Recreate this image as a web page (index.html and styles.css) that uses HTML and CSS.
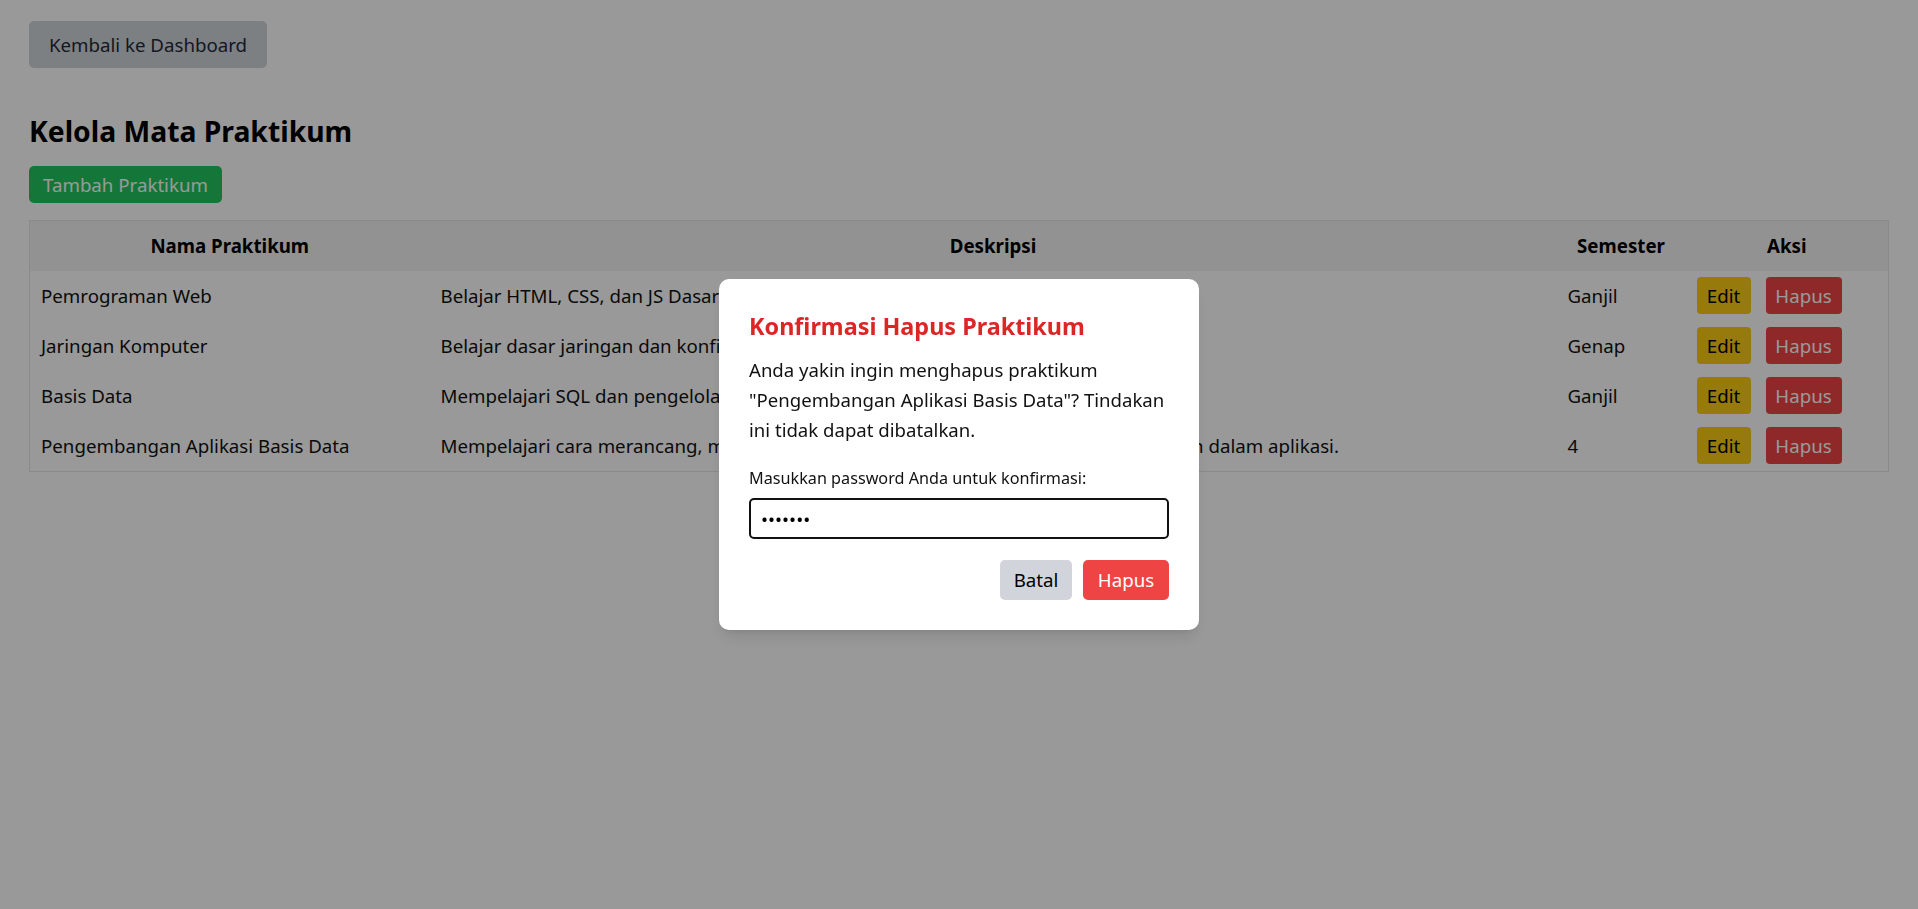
FILE: index.html
```html
<!DOCTYPE html>
<html lang="id">
<head>
<meta charset="utf-8">
<title>Kelola Mata Praktikum</title>
<link rel="stylesheet" href="styles.css">
</head>
<body>
<div class="page">
  <div class="top">
    <button class="btn btn-back">Kembali ke Dashboard</button>
  </div>
  <h1 class="title">Kelola Mata Praktikum</h1>
  <button class="btn btn-add">Tambah Praktikum</button>
  <table class="grid">
    <colgroup>
      <col class="c-nama">
      <col class="c-desc">
      <col class="c-sem">
      <col class="c-aksi">
    </colgroup>
    <thead>
      <tr><th>Nama Praktikum</th><th>Deskripsi</th><th>Semester</th><th>Aksi</th></tr>
    </thead>
    <tbody>
      <tr>
        <td>Pemrograman Web</td>
        <td>Belajar HTML, CSS, dan JS Dasar</td>
        <td>Ganjil</td>
        <td><div class="actions"><button class="btn btn-edit">Edit</button><button class="btn btn-del">Hapus</button></div></td>
      </tr>
      <tr>
        <td>Jaringan Komputer</td>
        <td>Belajar dasar jaringan dan konfigurasi perangkat</td>
        <td>Genap</td>
        <td><div class="actions"><button class="btn btn-edit">Edit</button><button class="btn btn-del">Hapus</button></div></td>
      </tr>
      <tr>
        <td>Basis Data</td>
        <td>Mempelajari SQL dan pengelolaan database</td>
        <td>Ganjil</td>
        <td><div class="actions"><button class="btn btn-edit">Edit</button><button class="btn btn-del">Hapus</button></div></td>
      </tr>
      <tr>
        <td>Pengembangan Aplikasi Basis Data</td>
        <td>Mempelajari cara merancang, membangun, dan mengelola basis data yang diterapkan dalam aplikasi.</td>
        <td>4</td>
        <td><div class="actions"><button class="btn btn-edit">Edit</button><button class="btn btn-del">Hapus</button></div></td>
      </tr>
    </tbody>
  </table>
</div>

<div class="overlay">
  <div class="modal">
    <h2 class="modal-title">Konfirmasi Hapus Praktikum</h2>
    <p class="modal-text">Anda yakin ingin menghapus praktikum "Pengembangan Aplikasi Basis Data"? Tindakan ini tidak dapat dibatalkan.</p>
    <label class="modal-label" for="pw">Masukkan password Anda untuk konfirmasi:</label>
    <input id="pw" class="modal-input" type="password" value="1234567">
    <div class="modal-actions">
      <button class="btn btn-cancel">Batal</button>
      <button class="btn btn-confirm">Hapus</button>
    </div>
  </div>
</div>
</body>
</html>
```

FILE: styles.css
```css
* { box-sizing: border-box; }

html, body {
  margin: 0;
  padding: 0;
  background: #ffffff;
  font-family: "Noto Sans", "Open Sans", sans-serif;
  color: #111827;
}

.page {
  padding: 21px 29px 0 29px;
}

.btn {
  font-family: inherit;
  border: none;
  cursor: pointer;
  display: inline-block;
}

.btn-back {
  background: #d1d5db;
  color: #1f2937;
  font-size: 18.7px;
  line-height: 29px;
  padding: 9px 0;
  border-radius: 5px;
  width: 238px;
  text-align: center;
}

.title {
  font-size: 28.3px;
  font-weight: 700;
  line-height: 38px;
  margin: 44px 0 16px 0;
  color: #000;
}

.btn-add {
  background: #22c55e;
  color: #ffffff;
  font-size: 18.7px;
  line-height: 29px;
  padding: 4px 0;
  border-radius: 5px;
  width: 193px;
  text-align: center;
}

.grid {
  margin-top: 17px;
  width: 100%;
  border-collapse: collapse;
  table-layout: fixed;
  border: 1px solid #e5e7eb;
  font-size: 18.7px;
}

.c-nama { width: 400px; }
.c-sem { width: 129px; }
.c-aksi { width: 203px; }

.grid th {
  background: #f3f4f6;
  font-weight: 700;
  text-align: center;
  line-height: 30px;
  padding: 10px 11px;
  color: #000;
}

.grid td {
  text-align: left;
  line-height: 29px;
  padding: 6px 11px 7px 11px;
  vertical-align: middle;
  color: #111;
  white-space: nowrap;
  overflow: hidden;
}

.actions {
  display: flex;
  gap: 15px;
}

.btn-edit {
  background: #facc15;
  color: #000;
  font-size: 18.7px;
  line-height: 29px;
  padding: 4px 0;
  width: 54px;
  text-align: center;
  border-radius: 4px;
}

.btn-del {
  background: #ef4444;
  color: #fff;
  font-size: 18.7px;
  line-height: 29px;
  padding: 4px 0;
  width: 76px;
  text-align: center;
  border-radius: 4px;
}

.overlay {
  position: fixed;
  inset: 0;
  background: rgba(0, 0, 0, 0.4);
  display: flex;
  align-items: center;
  justify-content: center;
}

.modal {
  width: 480px;
  background: #fff;
  border-radius: 10px;
  padding: 30px;
  box-shadow: 0 10px 15px -3px rgba(0,0,0,0.1), 0 4px 6px -4px rgba(0,0,0,0.1);
}

.modal-title {
  margin: 0;
  font-size: 23.4px;
  line-height: 34px;
  font-weight: 700;
  color: #dc2626;
}

.modal-text {
  margin: 12px 0 0 0;
  font-size: 18.6px;
  line-height: 29.7px;
  color: #111;
}

.modal-label {
  display: block;
  margin-top: 21px;
  font-size: 16.2px;
  line-height: 24px;
  color: #111;
}

.modal-input {
  display: block;
  width: 100%;
  height: 41px;
  margin-top: 8px;
  border: 2px solid #111;
  border-radius: 5px;
  padding: 0 10px;
  font-size: 18.7px;
  font-family: inherit;
}

.modal-actions {
  display: flex;
  justify-content: flex-end;
  gap: 11px;
  margin-top: 21px;
}

.btn-cancel {
  background: #d1d5db;
  color: #000;
  font-size: 18.7px;
  line-height: 28px;
  padding: 6px 0;
  width: 72px;
  border-radius: 5px;
}

.btn-confirm {
  background: #ef4444;
  color: #fff;
  font-size: 18.7px;
  line-height: 28px;
  padding: 6px 0;
  width: 86px;
  border-radius: 5px;
}
```
